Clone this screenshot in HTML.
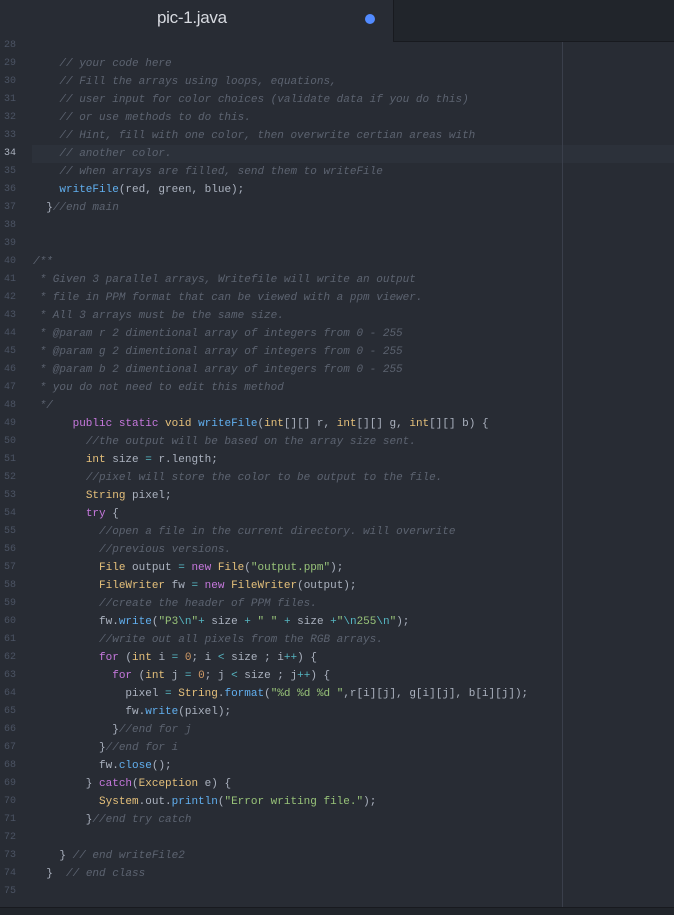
<!DOCTYPE html>
<html><head><meta charset="utf-8"><style>
html,body{margin:0;padding:0;width:674px;height:914px;overflow:hidden;background:#282c34;}
#tabbar{position:absolute;left:0;top:0;width:674px;height:42px;background:#282c34;}
#tabR{position:absolute;left:393px;top:0;width:281px;height:41px;background:#21252b;border-bottom:1px solid #181a1f;border-left:1px solid #181a1f;}
#title{position:absolute;left:157px;top:8px;font:17px "Liberation Sans",sans-serif;color:#d7dae0;letter-spacing:-0.3px;}
#dot{position:absolute;left:365px;top:14px;width:10px;height:10px;border-radius:50%;background:#528bff;}
#guide{position:absolute;left:562px;top:42px;width:1px;height:865px;background:#3a3f4b;}
#hl{position:absolute;left:32px;top:145px;width:642px;height:18px;background:#2c313a;}
#bottom{position:absolute;left:0;top:907px;width:674px;height:7px;background:#21252b;border-top:1px solid #181a1f;}
.ln{position:absolute;left:4px;font:10px "Liberation Mono",monospace;color:#4b5363;line-height:18px;}
.ln.cur{color:#abb2bf;}
.cd{position:absolute;left:33px;font:11px "Liberation Mono",monospace;color:#abb2bf;line-height:18px;white-space:pre;}
.c{color:#5c6370;font-style:italic}
.k{color:#c678dd}.t{color:#e5c07b}.f{color:#61afef}.s{color:#98c379}.o{color:#56b6c2}.n{color:#d19a66}
</style></head><body>
<div id="tabbar"></div><div id="tabR"></div>
<div id="title">pic-1.java</div><div id="dot"></div>
<div id="hl"></div>
<div id="guide"></div>
<div id="bottom"></div>
<div id="code">
<div class="ln" style="top:37px">28</div>
<div class="ln" style="top:55px">29</div><div class="cd" style="top:55px">    <span class="c">// your code here</span></div>
<div class="ln" style="top:73px">30</div><div class="cd" style="top:73px">    <span class="c">// Fill the arrays using loops, equations,</span></div>
<div class="ln" style="top:91px">31</div><div class="cd" style="top:91px">    <span class="c">// user input for color choices (validate data if you do this)</span></div>
<div class="ln" style="top:109px">32</div><div class="cd" style="top:109px">    <span class="c">// or use methods to do this.</span></div>
<div class="ln" style="top:127px">33</div><div class="cd" style="top:127px">    <span class="c">// Hint, fill with one color, then overwrite certian areas with</span></div>
<div class="ln cur" style="top:145px">34</div><div class="cd" style="top:145px">    <span class="c">// another color.</span></div>
<div class="ln" style="top:163px">35</div><div class="cd" style="top:163px">    <span class="c">// when arrays are filled, send them to writeFile</span></div>
<div class="ln" style="top:181px">36</div><div class="cd" style="top:181px">    <span class="f">writeFile</span>(red, green, blue);</div>
<div class="ln" style="top:199px">37</div><div class="cd" style="top:199px">  }<span class="c">//end main</span></div>
<div class="ln" style="top:217px">38</div>
<div class="ln" style="top:235px">39</div>
<div class="ln" style="top:253px">40</div><div class="cd" style="top:253px"><span class="c">/**</span></div>
<div class="ln" style="top:271px">41</div><div class="cd" style="top:271px"><span class="c"> * Given 3 parallel arrays, Writefile will write an output</span></div>
<div class="ln" style="top:289px">42</div><div class="cd" style="top:289px"><span class="c"> * file in PPM format that can be viewed with a ppm viewer.</span></div>
<div class="ln" style="top:307px">43</div><div class="cd" style="top:307px"><span class="c"> * All 3 arrays must be the same size.</span></div>
<div class="ln" style="top:325px">44</div><div class="cd" style="top:325px"><span class="c"> * @param r 2 dimentional array of integers from 0 - 255</span></div>
<div class="ln" style="top:343px">45</div><div class="cd" style="top:343px"><span class="c"> * @param g 2 dimentional array of integers from 0 - 255</span></div>
<div class="ln" style="top:361px">46</div><div class="cd" style="top:361px"><span class="c"> * @param b 2 dimentional array of integers from 0 - 255</span></div>
<div class="ln" style="top:379px">47</div><div class="cd" style="top:379px"><span class="c"> * you do not need to edit this method</span></div>
<div class="ln" style="top:397px">48</div><div class="cd" style="top:397px"><span class="c"> */</span></div>
<div class="ln" style="top:415px">49</div><div class="cd" style="top:415px">      <span class="k">public static</span> <span class="t">void</span> <span class="f">writeFile</span>(<span class="t">int</span>[][] r, <span class="t">int</span>[][] g, <span class="t">int</span>[][] b) {</div>
<div class="ln" style="top:433px">50</div><div class="cd" style="top:433px">        <span class="c">//the output will be based on the array size sent.</span></div>
<div class="ln" style="top:451px">51</div><div class="cd" style="top:451px">        <span class="t">int</span> size <span class="o">=</span> r.length;</div>
<div class="ln" style="top:469px">52</div><div class="cd" style="top:469px">        <span class="c">//pixel will store the color to be output to the file.</span></div>
<div class="ln" style="top:487px">53</div><div class="cd" style="top:487px">        <span class="t">String</span> pixel;</div>
<div class="ln" style="top:505px">54</div><div class="cd" style="top:505px">        <span class="k">try</span> {</div>
<div class="ln" style="top:523px">55</div><div class="cd" style="top:523px">          <span class="c">//open a file in the current directory. will overwrite</span></div>
<div class="ln" style="top:541px">56</div><div class="cd" style="top:541px">          <span class="c">//previous versions.</span></div>
<div class="ln" style="top:559px">57</div><div class="cd" style="top:559px">          <span class="t">File</span> output <span class="o">=</span> <span class="k">new</span> <span class="t">File</span>(<span class="s">"output.ppm"</span>);</div>
<div class="ln" style="top:577px">58</div><div class="cd" style="top:577px">          <span class="t">FileWriter</span> fw <span class="o">=</span> <span class="k">new</span> <span class="t">FileWriter</span>(output);</div>
<div class="ln" style="top:595px">59</div><div class="cd" style="top:595px">          <span class="c">//create the header of PPM files.</span></div>
<div class="ln" style="top:613px">60</div><div class="cd" style="top:613px">          fw.<span class="f">write</span>(<span class="s">"P3<span class="o">\n</span>"</span><span class="o">+</span> size <span class="o">+</span> <span class="s">" "</span> <span class="o">+</span> size <span class="o">+</span><span class="s">"<span class="o">\n</span>255<span class="o">\n</span>"</span>);</div>
<div class="ln" style="top:631px">61</div><div class="cd" style="top:631px">          <span class="c">//write out all pixels from the RGB arrays.</span></div>
<div class="ln" style="top:649px">62</div><div class="cd" style="top:649px">          <span class="k">for</span> (<span class="t">int</span> i <span class="o">=</span> <span class="n">0</span>; i <span class="o">&lt;</span> size ; i<span class="o">++</span>) {</div>
<div class="ln" style="top:667px">63</div><div class="cd" style="top:667px">            <span class="k">for</span> (<span class="t">int</span> j <span class="o">=</span> <span class="n">0</span>; j <span class="o">&lt;</span> size ; j<span class="o">++</span>) {</div>
<div class="ln" style="top:685px">64</div><div class="cd" style="top:685px">              pixel <span class="o">=</span> <span class="t">String</span>.<span class="f">format</span>(<span class="s">"%d %d %d "</span>,r[i][j], g[i][j], b[i][j]);</div>
<div class="ln" style="top:703px">65</div><div class="cd" style="top:703px">              fw.<span class="f">write</span>(pixel);</div>
<div class="ln" style="top:721px">66</div><div class="cd" style="top:721px">            }<span class="c">//end for j</span></div>
<div class="ln" style="top:739px">67</div><div class="cd" style="top:739px">          }<span class="c">//end for i</span></div>
<div class="ln" style="top:757px">68</div><div class="cd" style="top:757px">          fw.<span class="f">close</span>();</div>
<div class="ln" style="top:775px">69</div><div class="cd" style="top:775px">        } <span class="k">catch</span>(<span class="t">Exception</span> e) {</div>
<div class="ln" style="top:793px">70</div><div class="cd" style="top:793px">          <span class="t">System</span>.out.<span class="f">println</span>(<span class="s">"Error writing file."</span>);</div>
<div class="ln" style="top:811px">71</div><div class="cd" style="top:811px">        }<span class="c">//end try catch</span></div>
<div class="ln" style="top:829px">72</div>
<div class="ln" style="top:847px">73</div><div class="cd" style="top:847px">    } <span class="c">// end writeFile2</span></div>
<div class="ln" style="top:865px">74</div><div class="cd" style="top:865px">  }  <span class="c">// end class</span></div>
<div class="ln" style="top:883px">75</div>
</div>
</body></html>
